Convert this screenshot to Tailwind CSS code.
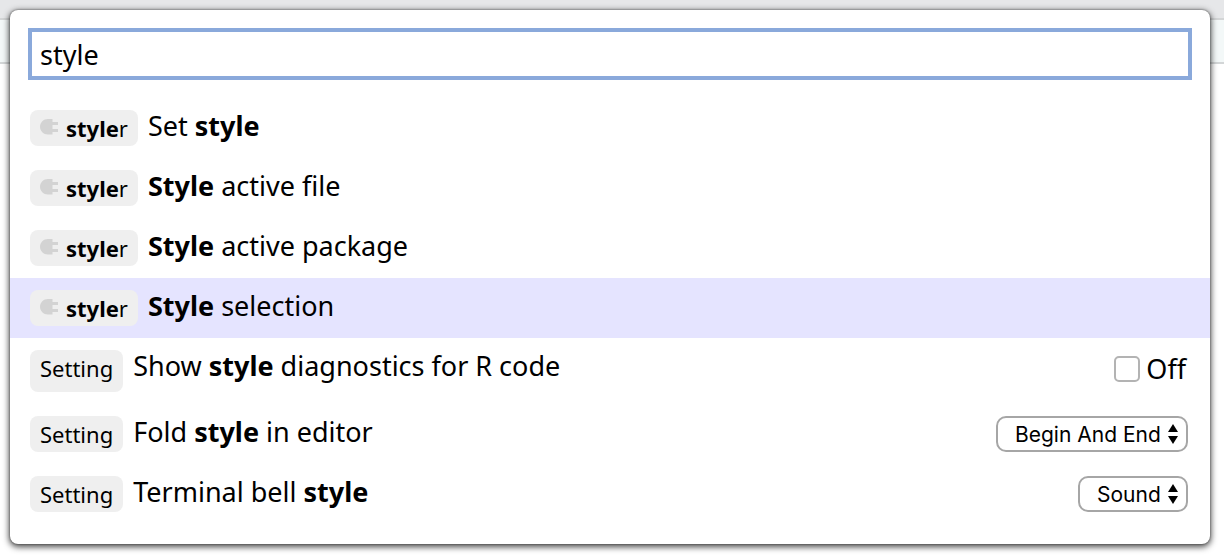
<!DOCTYPE html>
<html lang="en">
<head>
    <meta charset="UTF-8">
    <meta name="viewport" content="width=device-width, initial-scale=1.0">
    <title>Command Palette</title>
    <script src="https://cdn.jsdelivr.net/npm/@tailwindcss/browser@4"></script>
</head>
<body class="relative min-h-screen overflow-hidden bg-white py-[10px] pr-[14px] pl-[10px] font-['Noto_Sans',sans-serif] text-black">
    <!-- Toolbars behind the palette -->
    <div class="absolute inset-x-0 top-0">
        <div class="h-5 border-b-2 border-[#d3d5d6] bg-[#e6e7e9]"></div>
        <div class="h-11 border-b-2 border-[#d3d6d7] bg-[#f3f8f8]"></div>
    </div>

    <svg class="hidden">
        <symbol id="plug" viewBox="0 0 18 18">
            <path fill="currentColor" d="M8 0h4.500v3H18v3h-5.500v4H18v3h-5.500v2.500H8C3.500 15.500 0 12 0 7.750S3.500 0 8 0z"/>
        </symbol>
        <symbol id="arrows" viewBox="0 0 10 20">
            <path fill="currentColor" d="M5 0l5 8H0zM0 12h10l-5 8z"/>
        </symbol>
    </svg>

    <main class="relative rounded-lg bg-white pt-[18px] pb-5 shadow-[0_2px_6px_1px_rgba(0,0,0,0.7),0_0_2px_rgba(0,0,0,0.5)]">
        <div class="px-[18px]">
            <input type="text" value="style" aria-label="Search commands" class="block h-[52px] w-full border-4 border-[#8aa9db] bg-white px-2 text-[27px] leading-8 outline-none">
        </div>

        <ul class="mt-[18px] text-[27px] leading-8">
            <li class="flex gap-[10px] px-5 py-3">
                <span class="flex h-9 items-center rounded-lg bg-[#efefef] px-[10px] text-[22px]">
                    <svg class="mr-2 h-[18px] w-[18px] text-[#d3d3d3]"><use href="#plug"/></svg>
                    <span><b>style</b>r</span>
                </span>
                <span>Set <b>style</b></span>
            </li>
            <li class="flex gap-[10px] px-5 py-3">
                <span class="flex h-9 items-center rounded-lg bg-[#efefef] px-[10px] text-[22px]">
                    <svg class="mr-2 h-[18px] w-[18px] text-[#d3d3d3]"><use href="#plug"/></svg>
                    <span><b>style</b>r</span>
                </span>
                <span><b>Style</b> active file</span>
            </li>
            <li class="flex gap-[10px] px-5 py-3">
                <span class="flex h-9 items-center rounded-lg bg-[#efefef] px-[10px] text-[22px]">
                    <svg class="mr-2 h-[18px] w-[18px] text-[#d3d3d3]"><use href="#plug"/></svg>
                    <span><b>style</b>r</span>
                </span>
                <span><b>Style</b> active package</span>
            </li>
            <li class="flex gap-[10px] bg-[#e5e4ff] px-5 py-3">
                <span class="flex h-9 items-center rounded-lg bg-[#efefef] px-[10px] text-[22px]">
                    <svg class="mr-2 h-[18px] w-[18px] text-[#d3d3d3]"><use href="#plug"/></svg>
                    <span><b>style</b>r</span>
                </span>
                <span><b>Style</b> selection</span>
            </li>
            <li class="flex gap-[10px] px-5 py-3">
                <span class="rounded-lg bg-[#efefef] px-[10px] pt-[2px] text-[22px]">Setting</span>
                <span>Show <b>style</b> diagnostics for R code</span>
                <label class="ml-auto flex h-[42px] items-center gap-[6px] pr-1 pb-1">
                    <input type="checkbox" class="h-[26px] w-[26px] appearance-none rounded-[5px] border-2 border-[#b3b3b3] bg-white">
                    Off
                </label>
            </li>
            <li class="flex gap-[10px] px-5 py-3">
                <span class="rounded-lg bg-[#efefef] px-[10px] pt-[2px] text-[22px]">Setting</span>
                <label for="fold">Fold <b>style</b> in editor</label>
                <span class="relative ml-auto mr-[2px]">
                    <select id="fold" class="block h-9 appearance-none rounded-[10px] border-2 border-[#a6a6a6] bg-white pt-[1px] pr-[25px] pl-[17px] font-['Inter',sans-serif] text-[21px] leading-8">
                        <option>Begin And End</option>
                    </select>
                    <svg class="pointer-events-none absolute top-2 right-[10px] h-5 w-[10px]"><use href="#arrows"/></svg>
                </span>
            </li>
            <li class="flex gap-[10px] px-5 py-3">
                <span class="rounded-lg bg-[#efefef] px-[10px] pt-[2px] text-[22px]">Setting</span>
                <label for="bell">Terminal bell <b>style</b></label>
                <span class="relative ml-auto mr-[2px]">
                    <select id="bell" class="block h-9 appearance-none rounded-[10px] border-2 border-[#a6a6a6] bg-white pt-[1px] pr-[25px] pl-[17px] font-['Inter',sans-serif] text-[21px] leading-8">
                        <option>Sound</option>
                        <option>None</option>
                    </select>
                    <svg class="pointer-events-none absolute top-2 right-[10px] h-5 w-[10px]"><use href="#arrows"/></svg>
                </span>
            </li>
        </ul>
    </main>
</body>
</html>
